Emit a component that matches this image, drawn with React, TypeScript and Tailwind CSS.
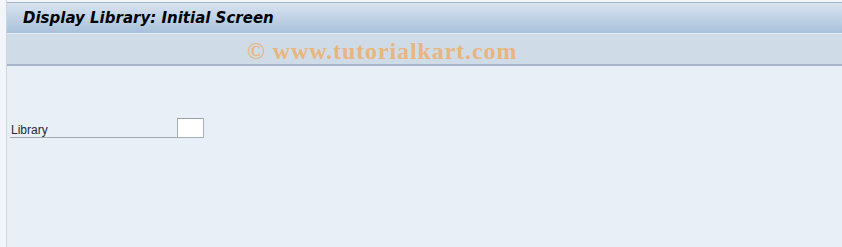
export default function App() {
  return (
    <div className="w-[842px] h-[247px] bg-[#f2f5f9] flex overflow-hidden font-['Liberation_Sans',sans-serif]">
      <div className="w-[6px] shrink-0" />
      <div className="flex-1 flex flex-col border-l border-[#cdd5e0]">
        <div className="mt-[2px] h-[31px] border-t border-[#a7b5c8] bg-gradient-to-b from-[#d8e3ef] to-[#a9c1db] flex items-center pl-[16px]">
          <span className="text-[15px] font-bold italic text-black font-['DejaVu_Sans',sans-serif]">
            Display Library: Initial Screen
          </span>
        </div>
        <div className="h-[33px] border-t border-[#e6eef6] border-b-2 border-b-[#a6b6c8] bg-[#cfdce7] flex items-center pl-[240px] pt-[4px]">
          <span className="text-[24px] font-bold text-[#e9b57e] font-['Liberation_Serif',serif] leading-none tracking-[0.9px]">
            © www.tutorialkart.com
          </span>
        </div>
        <div className="flex-1 bg-[#e8eff7] pt-[52px] pl-[3px]">
          <div className="flex items-end">
            <div className="w-[167px] h-[19px] border-b border-[#a3a9b0] flex items-end pb-[1px] pl-[1px]">
              <span className="text-[12px] text-[#1f2a3a] leading-none">Library</span>
            </div>
            <div className="w-[27px] h-[20px] bg-white border border-[#a9afb6] border-t-[#9da3aa]" />
          </div>
        </div>
      </div>
    </div>
  );
}
